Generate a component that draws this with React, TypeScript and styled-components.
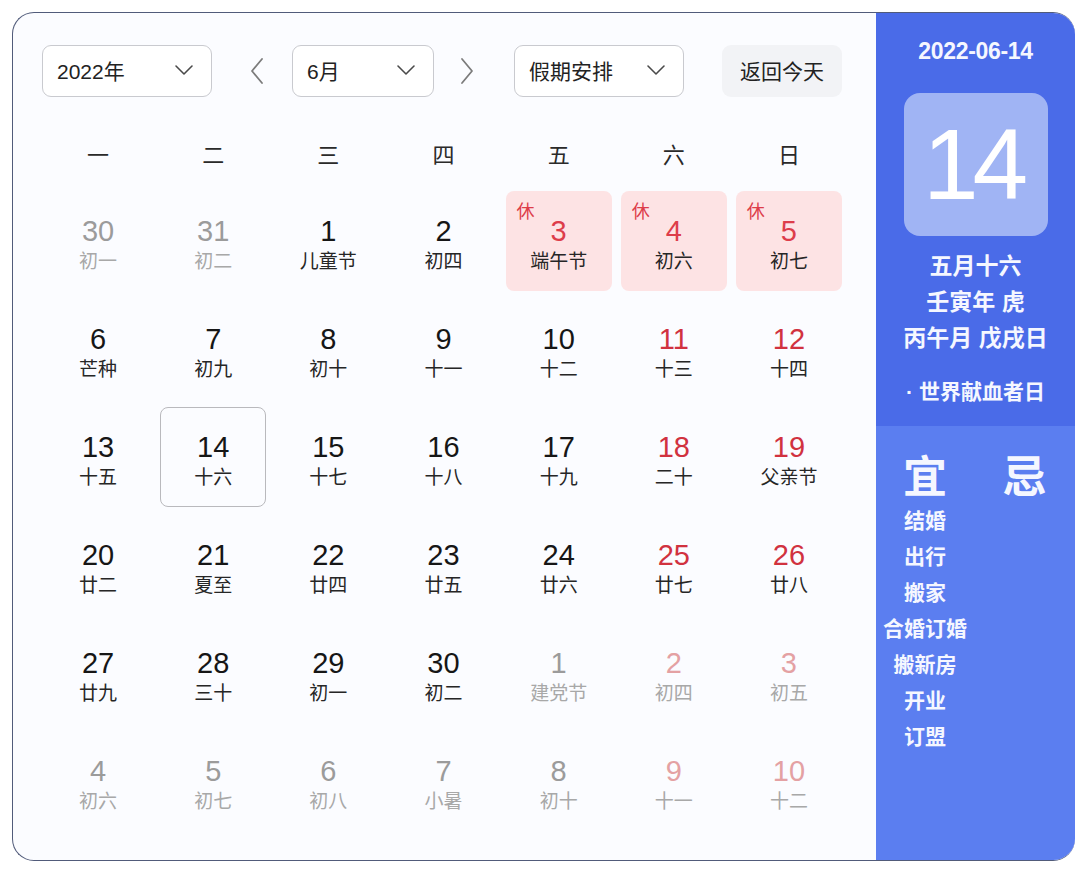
import { FC } from 'react';
import styled, { createGlobalStyle, css } from 'styled-components';

const GlobalStyle = createGlobalStyle`
  html, body {
    margin: 0;
    padding: 0;
    background: #ffffff;
  }
  body {
    font-family: "Liberation Sans", "Noto Sans CJK SC", sans-serif;
    color: #1f1f1f;
  }
`;

const Page = styled.div`
  padding: 12px 0 0 12px;
`;

const Frame = styled.div`
  width: 1063px;
  height: 849px;
  box-sizing: border-box;
  display: flex;
  border: 1.5px solid #515b7a;
  border-right: none;
  border-radius: 22px;
  overflow: hidden;
  background: #fbfcff;
`;

const CalendarPanel = styled.div`
  flex: 1;
  padding: 32px 0 0 29px;
  display: flex;
  flex-direction: column;
`;

const Toolbar = styled.div`
  display: flex;
  align-items: center;
  height: 52px;
`;

const Select = styled.div<{ $width: number }>`
  width: ${({ $width }) => $width}px;
  height: 52px;
  box-sizing: border-box;
  display: flex;
  align-items: center;
  justify-content: space-between;
  padding: 0 17px 3px 14px;
  border: 1px solid #c9cacf;
  border-radius: 9px;
  background: #ffffff;
  font-size: 21px;
  color: #222;
`;

const ArrowButton = styled.div<{ $left: number; $right: number }>`
  width: 24px;
  display: flex;
  justify-content: center;
  margin: 0 ${({ $right }) => $right}px 0 ${({ $left }) => $left}px;

  svg {
    flex-shrink: 0;
  }
`;

const TodayButton = styled.div`
  width: 120px;
  height: 52px;
  box-sizing: border-box;
  padding-bottom: 3px;
  margin-left: 38px;
  display: flex;
  align-items: center;
  justify-content: center;
  border-radius: 9px;
  background: #f2f3f6;
  font-size: 21px;
  color: #222;
`;

const WeekHeader = styled.div`
  display: grid;
  grid-template-columns: repeat(7, 1fr);
  column-gap: 9px;
  width: 797px;
  margin: 36px 0 2px 3px;
  height: 40px;
  align-items: center;
`;

const WeekDay = styled.div`
  text-align: center;
  font-size: 22px;
  color: #2a2a2a;
`;

const Grid = styled.div`
  display: grid;
  grid-template-columns: repeat(7, 1fr);
  grid-auto-rows: 100px;
  column-gap: 9px;
  row-gap: 8px;
  width: 797px;
  margin: 16px 0 0 3px;
`;

type Tone = 'normal' | 'weekend' | 'muted' | 'mutedWeekend';

const numberColors: Record<Tone, string> = {
  normal: '#161616',
  weekend: '#d1323f',
  muted: '#9b9b9b',
  mutedWeekend: '#e4a1a3',
};

const lunarColors: Record<Tone, string> = {
  normal: '#262626',
  weekend: '#262626',
  muted: '#a8a8a8',
  mutedWeekend: '#a8a8a8',
};

const Cell = styled.div<{ $holiday?: boolean; $selected?: boolean }>`
  position: relative;
  box-sizing: border-box;
  display: flex;
  flex-direction: column;
  align-items: center;
  padding-top: 23px;
  border-radius: 8px;
  border: 1px solid transparent;
  ${({ $holiday }) =>
    $holiday &&
    css`
      background: #fde3e4;
    `}
  ${({ $selected }) =>
    $selected &&
    css`
      border-color: #b9b9bd;
    `}
`;

const DayNumber = styled.div<{ $tone: Tone; $holiday?: boolean }>`
  font-size: 29px;
  line-height: 32px;
  color: ${({ $tone, $holiday }) => ($holiday ? '#dd3d4a' : numberColors[$tone])};
`;

const Lunar = styled.div<{ $tone: Tone }>`
  margin-top: 3px;
  font-size: 19px;
  line-height: 24px;
  color: ${({ $tone }) => lunarColors[$tone]};
`;

const RestTag = styled.span`
  position: absolute;
  left: 10px;
  top: 10px;
  font-size: 18px;
  line-height: 20px;
  color: #dd3d4a;
`;

const InfoPanel = styled.div`
  width: 199px;
  display: flex;
  flex-direction: column;
  color: #f5f7ff;
  font-weight: 700;
`;

const InfoTop = styled.div`
  height: 413px;
  background: #4a6be8;
  display: flex;
  flex-direction: column;
  align-items: center;
  padding-top: 24px;
  box-sizing: border-box;
`;

const DateLabel = styled.div`
  font-size: 23px;
  line-height: 28px;
  letter-spacing: -0.3px;
`;

const DayBox = styled.div`
  margin-top: 28px;
  width: 144px;
  height: 143px;
  border-radius: 16px;
  background: #a0b4f4;
  display: flex;
  align-items: center;
  justify-content: center;
  font-size: 100px;
  font-weight: 400;
  letter-spacing: -6px;
  padding-right: 6px;
  box-sizing: border-box;
  color: #ffffff;
`;

const LunarLines = styled.div`
  margin-top: 12px;
  text-align: center;
  font-size: 23px;
  line-height: 36px;
`;

const Festival = styled.div`
  margin-top: 18px;
  font-size: 21px;
  line-height: 36px;
`;

const InfoBottom = styled.div`
  flex: 1;
  background: #5b7ef0;
  display: grid;
  grid-template-columns: 98px 1fr;
  align-content: start;
  padding-top: 28px;
`;

const AdviceColumn = styled.div`
  display: flex;
  flex-direction: column;
  align-items: center;
`;

const AdviceTitle = styled.div`
  font-size: 44px;
  line-height: 48px;
  margin-bottom: 1px;
`;

const AdviceItem = styled.div`
  font-size: 21px;
  line-height: 36px;
  white-space: nowrap;
`;

const ChevronDown: FC = () => (
  <svg width="20" height="12" viewBox="0 0 20 12" fill="none">
    <polyline points="2,2 10,10 18,2" stroke="#4a4a4a" strokeWidth="1.6" strokeLinecap="round" strokeLinejoin="round" />
  </svg>
);

const Arrow: FC<{ dir: 'left' | 'right' }> = ({ dir }) => (
  <svg width="14" height="28" viewBox="0 0 14 28" fill="none">
    <polyline
      points={dir === 'left' ? '12,2 2,14 12,26' : '2,2 12,14 2,26'}
      stroke="#7c7c7c"
      strokeWidth="1.8"
      strokeLinecap="round"
      strokeLinejoin="round"
    />
  </svg>
);

type Day = {
  n: number;
  lunar: string;
  tone: Tone;
  holiday?: boolean;
  selected?: boolean;
};

const d = (n: number, lunar: string, tone: Tone = 'normal', extra: Partial<Day> = {}): Day => ({
  n,
  lunar,
  tone,
  ...extra,
});

const days: Day[] = [
  d(30, '初一', 'muted'),
  d(31, '初二', 'muted'),
  d(1, '儿童节'),
  d(2, '初四'),
  d(3, '端午节', 'normal', { holiday: true }),
  d(4, '初六', 'normal', { holiday: true }),
  d(5, '初七', 'normal', { holiday: true }),
  d(6, '芒种'),
  d(7, '初九'),
  d(8, '初十'),
  d(9, '十一'),
  d(10, '十二'),
  d(11, '十三', 'weekend'),
  d(12, '十四', 'weekend'),
  d(13, '十五'),
  d(14, '十六', 'normal', { selected: true }),
  d(15, '十七'),
  d(16, '十八'),
  d(17, '十九'),
  d(18, '二十', 'weekend'),
  d(19, '父亲节', 'weekend'),
  d(20, '廿二'),
  d(21, '夏至'),
  d(22, '廿四'),
  d(23, '廿五'),
  d(24, '廿六'),
  d(25, '廿七', 'weekend'),
  d(26, '廿八', 'weekend'),
  d(27, '廿九'),
  d(28, '三十'),
  d(29, '初一'),
  d(30, '初二'),
  d(1, '建党节', 'muted'),
  d(2, '初四', 'mutedWeekend'),
  d(3, '初五', 'mutedWeekend'),
  d(4, '初六', 'muted'),
  d(5, '初七', 'muted'),
  d(6, '初八', 'muted'),
  d(7, '小暑', 'muted'),
  d(8, '初十', 'muted'),
  d(9, '十一', 'mutedWeekend'),
  d(10, '十二', 'mutedWeekend'),
];

const weekDays = ['一', '二', '三', '四', '五', '六', '日'];
const goodFor = ['结婚', '出行', '搬家', '合婚订婚', '搬新房', '开业', '订盟'];

export default function App() {
  return (
    <>
      <GlobalStyle />
      <Page>
        <Frame>
          <CalendarPanel>
            <Toolbar>
              <Select $width={170}>
                2022年
                <ChevronDown />
              </Select>
              <ArrowButton $left={33} $right={23}>
                <Arrow dir="left" />
              </ArrowButton>
              <Select $width={142}>
                6月
                <ChevronDown />
              </Select>
              <ArrowButton $left={21} $right={35}>
                <Arrow dir="right" />
              </ArrowButton>
              <Select $width={170}>
                假期安排
                <ChevronDown />
              </Select>
              <TodayButton>返回今天</TodayButton>
            </Toolbar>

            <WeekHeader>
              {weekDays.map((w) => (
                <WeekDay key={w}>{w}</WeekDay>
              ))}
            </WeekHeader>

            <Grid>
              {days.map((day, i) => (
                <Cell key={i} $holiday={day.holiday} $selected={day.selected}>
                  {day.holiday && <RestTag>休</RestTag>}
                  <DayNumber $tone={day.tone} $holiday={day.holiday}>
                    {day.n}
                  </DayNumber>
                  <Lunar $tone={day.tone}>{day.lunar}</Lunar>
                </Cell>
              ))}
            </Grid>
          </CalendarPanel>

          <InfoPanel>
            <InfoTop>
              <DateLabel>2022-06-14</DateLabel>
              <DayBox>14</DayBox>
              <LunarLines>
                <div>五月十六</div>
                <div>壬寅年 虎</div>
                <div>丙午月 戊戌日</div>
              </LunarLines>
              <Festival>· 世界献血者日</Festival>
            </InfoTop>
            <InfoBottom>
              <AdviceColumn>
                <AdviceTitle>宜</AdviceTitle>
                {goodFor.map((item) => (
                  <AdviceItem key={item}>{item}</AdviceItem>
                ))}
              </AdviceColumn>
              <AdviceColumn>
                <AdviceTitle>忌</AdviceTitle>
              </AdviceColumn>
            </InfoBottom>
          </InfoPanel>
        </Frame>
      </Page>
    </>
  );
}
